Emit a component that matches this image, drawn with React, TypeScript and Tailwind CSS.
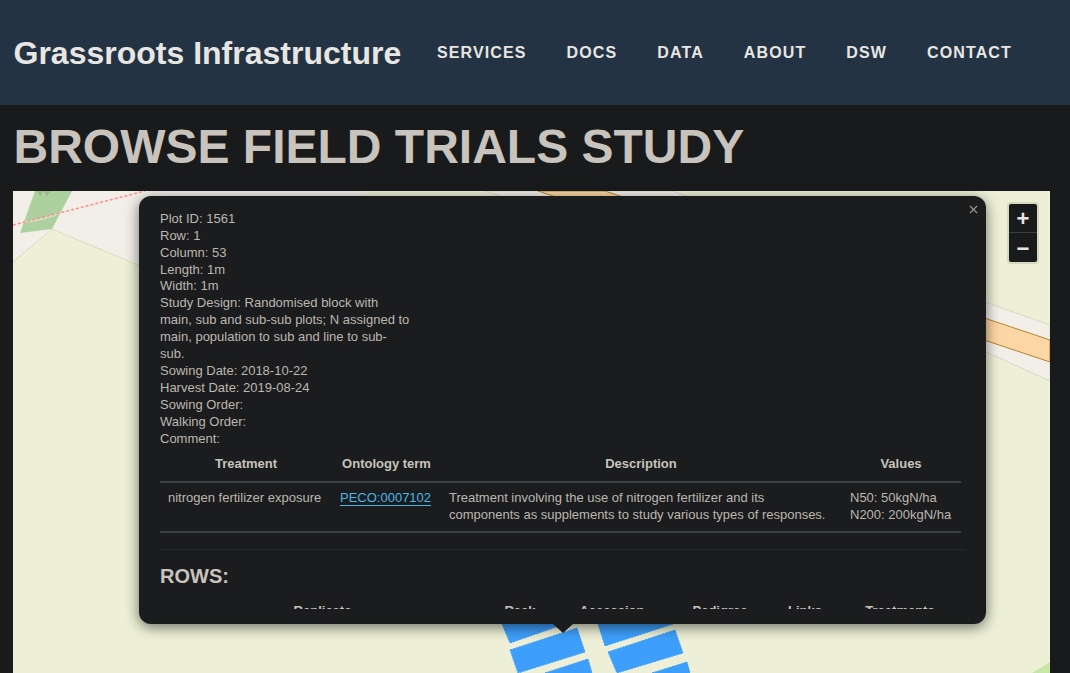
import React from "react";
import { X } from "lucide-react";

const navItems = ["Services", "Docs", "Data", "About", "DSW", "Contact"];

const plotLines = [
  "Plot ID: 1561",
  "Row: 1",
  "Column: 53",
  "Length: 1m",
  "Width: 1m",
  "Study Design: Randomised block with main, sub and sub-sub plots; N assigned to main, population to sub and line to sub-sub.",
  "Sowing Date: 2018-10-22",
  "Harvest Date: 2019-08-24",
  "Sowing Order:",
  "Walking Order:",
  "Comment:",
];

// base map and plots, coordinates are relative to the map's top left
function MapTiles() {
  return (
    <svg className="absolute inset-0 h-full w-full" viewBox="0 0 1037 482">
      <rect width="1037" height="482" fill="#edf0d6" />
      <polygon points="0,71 39,38 125,74 250,120 352,0 0,0" fill="#f2efe9" />
      <polyline points="0,71 39,38 125,74" fill="none" stroke="#d9dcc0" strokeWidth="1" />
      <polygon points="22,0 59,0 39,38 7,42" fill="#add19e" />
      <path d="M10,31 Q30,29 47,22" fill="none" stroke="#d5e2c4" strokeWidth="2" />
      <g fill="none" stroke="#8fae84" strokeWidth="1">
        <path d="M27,0 v5 M34,0 v5 M24,0 l3,3 l3,-3 M31,0 l3,3 l3,-3" />
      </g>
      <line x1="0" y1="34" x2="132" y2="0" stroke="#ff8f8f" strokeWidth="1.5" strokeDasharray="3 2" />
      <polygon points="472,0 659,0 1037,134 1037,190 973,161" fill="#f2efe9" stroke="#d9d8c8" strokeWidth="1" />
      <polygon points="525,0 592,0 1037,149 1037,171" fill="#fcd6a4" stroke="#b5862a" strokeWidth="1" />
      <g fill="#3d9ffb" stroke="#3d9ffb" strokeWidth="1" strokeDasharray="2 1">
        <polygon points="489,433 497,452 552,433" />
        <polygon points="497,459 564,437 572,461 505,482" />
        <polygon points="532,482 575,468 579,482" />
        <polygon points="585,433 592,455 660,433" />
        <polygon points="595,461 662,439 670,462 604,482" />
        <polygon points="639,482 674,471 677,482" />
      </g>
      <polygon points="1019,482 1037,471 1037,482" fill="#c8e6a6" />
    </svg>
  );
}

function ZoomControl() {
  return (
    <div className="absolute top-[11px] right-[11px] z-10 w-[32px] rounded-[4px] border-2 border-[#d5d8bc] bg-[#181a1b] text-[22px] font-bold text-[#e8e6e3]">
      <div className="flex h-[29px] items-center justify-center border-b border-[#3b3f41]">+</div>
      <div className="flex h-[29px] items-center justify-center pt-px">−</div>
    </div>
  );
}

function Popup() {
  return (
    <div className="absolute top-[5px] left-[126px] z-20 h-[428px] w-[847px] rounded-xl bg-[#1a1c1e] text-[13px] leading-[16.9px] text-[#bdb7af] shadow-[0_3px_14px_rgba(0,0,0,0.55)]">
      <X className="absolute top-[7px] right-[6px] h-[13px] w-[13px] text-[#a09a90]" strokeWidth={2} />
      <div className="mx-[21px] mt-[14.8px] h-[398.2px] overflow-hidden">
        <div className="w-[250px]">
          {plotLines.map((line) => (
            <div key={line}>{line}</div>
          ))}
        </div>
        <table className="mt-[0.4px] w-[801px] table-fixed border-collapse">
          <thead>
            <tr className="h-[34px] border-b-2 border-[#3a4042] font-bold text-[#c8c3bc]">
              <th className="w-[172px]">Treatment</th>
              <th className="w-[109px]">Ontology term</th>
              <th className="w-[400px]">Description</th>
              <th>Values</th>
            </tr>
          </thead>
          <tbody>
            <tr className="h-[50px] border-b-2 border-[#3a4042] align-top">
              <td className="pt-[7px] pl-2">nitrogen fertilizer exposure</td>
              <td className="pt-[7px] pl-[8px]">
                <a className="border-b border-[#4db5e8] text-[#4db5e8]">PECO:0007102</a>
              </td>
              <td className="pt-[7px] pr-[8px] pl-[8px]">
                Treatment involving the use of nitrogen fertilizer and its components as supplements to study various types of responses.
              </td>
              <td className="pt-[7px] pl-[9px]">
                N50: 50kgN/ha
                <br />
                N200: 200kgN/ha
              </td>
            </tr>
          </tbody>
        </table>
        <hr className="mt-4 border-[#26292b]" />
        <h2 className="mt-[14px] text-xl leading-6 font-bold text-[#c8c3bc]">ROWS:</h2>
        <table className="mt-[15px] w-[801px] table-fixed border-collapse">
          <thead>
            <tr className="font-bold text-[#c8c3bc]">
              <th className="w-[325px]">Replicate</th>
              <th className="w-[70px]">Rack</th>
              <th className="w-[114px]">Accession</th>
              <th className="w-[102px]">Pedigree</th>
              <th className="w-[68px]">Links</th>
              <th>Treatments</th>
            </tr>
          </thead>
        </table>
      </div>
      {/* tip */}
      <div className="absolute top-full left-[414px] h-0 w-0 border-x-[10px] border-t-[9px] border-x-transparent border-t-[#1a1c1e]" />
    </div>
  );
}

export default function App() {
  return (
    <div className="flex h-screen w-full flex-col overflow-hidden bg-[#181a1b] font-['Liberation_Sans',sans-serif]">
      <header className="flex h-[105px] shrink-0 items-center bg-[#233343] pl-[13.5px]">
        <span className="w-[387.5px] text-[32px] font-bold whitespace-nowrap text-[#e8e6e3]">Grassroots Infrastructure</span>
        <nav className="ml-9 flex gap-10">
          {navItems.map((item) => (
            <a key={item} className="text-base font-bold tracking-[1.12px] text-[#e8e6e3] uppercase">
              {item}
            </a>
          ))}
        </nav>
      </header>
      <h1 className="mt-[14px] ml-[13.5px] text-[48px] leading-[55px] font-bold text-[#c8c3bc]">BROWSE FIELD TRIALS STUDY</h1>
      <div className="relative mx-[13px] mt-[17px] w-[1037px] flex-1">
        <MapTiles />
        <ZoomControl />
        <Popup />
      </div>
    </div>
  );
}
